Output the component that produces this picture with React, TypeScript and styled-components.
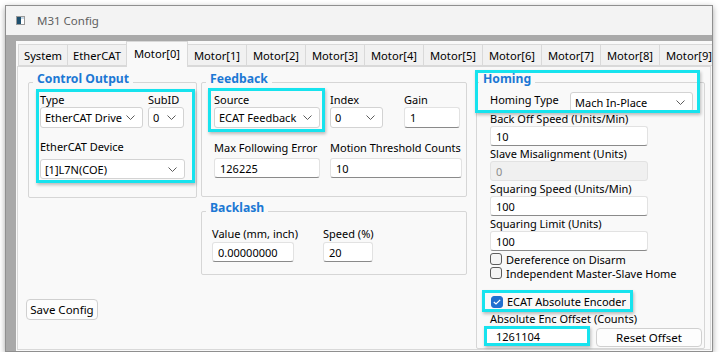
import styled, { createGlobalStyle } from 'styled-components';

const GlobalStyle = createGlobalStyle`
  html, body {
    margin: 0;
    padding: 0;
    background: #ffffff;
  }
  body {
    font-family: 'Noto Sans', 'Segoe UI', sans-serif;
    font-size: 11px;
    color: #000000;
  }
  * {
    box-sizing: border-box;
  }
`;

const CYAN = '#17e3ee';
const PANEL = '#f9f9f9';

const Window = styled.div`
  margin: 5px 0 0 5px;
  width: 708px;
  height: 347px;
  display: flex;
  flex-direction: column;
  border: 1px solid #8f8f8f;
  background: #f3f3f3;
  box-shadow: 0 2px 6px rgba(0, 0, 0, 0.35);
`;

const TitleBar = styled.div`
  height: 29px;
  flex-shrink: 0;
  display: flex;
  align-items: center;
  gap: 12px;
  padding-left: 10px;
  background: #f3f3f3;
`;

const WindowTitle = styled.span`
  color: #5f5f5f;
  font-size: 11.5px;
`;

const Frame = styled.div`
  flex: 1;
  display: flex;
  min-height: 0;
  padding: 6px 0 0 10px;
  background: #a9a9a9;
`;

const Surface = styled.div`
  flex: 1;
  min-width: 0;
  display: flex;
  flex-direction: column;
  padding: 0 1px 1px 1px;
  background: ${PANEL};
  overflow: hidden;
`;

const TabStrip = styled.div`
  height: 25px;
  flex-shrink: 0;
  display: flex;
  align-items: flex-end;
  padding-left: 1px;
  position: relative;
  z-index: 1;
`;

const Tab = styled.div<{ $width: number; $active?: boolean }>`
  flex-shrink: 0;
  width: ${(p) => p.$width}px;
  height: ${(p) => (p.$active ? 26 : 22)}px;
  margin-left: -1px;
  margin-bottom: ${(p) => (p.$active ? -1 : 0)}px;
  padding-bottom: ${(p) => (p.$active ? 3 : 0)}px;
  display: flex;
  align-items: center;
  justify-content: center;
  border: 1px solid #d9d9d9;
  border-bottom: ${(p) => (p.$active ? 'none' : '1px solid #d9d9d9')};
  background: ${(p) => (p.$active ? PANEL : '#f1f1f1')};
  font-size: 11.2px;
  white-space: nowrap;
  &:first-child {
    margin-left: 0;
  }
`;

const TabPanel = styled.div`
  flex: 1;
  min-height: 0;
  display: grid;
  grid-template-columns: 169px 266px 234px;
  column-gap: 4px;
  align-items: start;
  padding: 15px 0 0 10px;
  border: 1px solid #d9d9d9;
  background: ${PANEL};
`;

const Column = styled.div`
  display: flex;
  flex-direction: column;
  align-items: stretch;
`;

const Group = styled.section<{ $pad: string }>`
  position: relative;
  border: 1px solid #d6d6d6;
  border-radius: 2px;
  padding: ${(p) => p.$pad};
`;

const HomingGroup = styled(Group)`
  margin-left: 5px;
  align-self: stretch;
`;

const GroupTitle = styled.div<{ $indent: number }>`
  width: fit-content;
  margin: -12px 0 0 ${(p) => p.$indent}px;
  padding: 0 4px;
  background: ${PANEL};
  color: #1c78d4;
  font-size: 12.2px;
  font-weight: 700;
  line-height: 16px;
`;

const Highlight = styled.div<{ $pad: string; $width?: number }>`
  width: ${(p) => (p.$width ? `${p.$width}px` : 'auto')};
  border: 3px solid ${CYAN};
  padding: ${(p) => p.$pad};
  box-shadow: 1px 2px 3px rgba(0, 0, 0, 0.25);
`;

const HighlightOverlay = styled.div`
  position: absolute;
  left: -2px;
  top: -13px;
  width: 225px;
  height: 43px;
  border: 3px solid ${CYAN};
  box-shadow: 1px 2px 3px rgba(0, 0, 0, 0.25);
  pointer-events: none;
`;

const Label = styled.div<{ $lh?: number; $mb?: number }>`
  line-height: ${(p) => p.$lh ?? 15}px;
  margin-bottom: ${(p) => p.$mb ?? 0}px;
  white-space: nowrap;
`;

const Combo = styled.div<{ $w: number; $h?: number }>`
  width: ${(p) => p.$w}px;
  height: ${(p) => p.$h ?? 21}px;
  display: flex;
  align-items: center;
  justify-content: space-between;
  padding: 0 7px 0 4px;
  border: 1px solid #d3d3d3;
  border-radius: 3px;
  background: #ffffff;
  white-space: nowrap;
`;

const TextBox = styled.input<{ $w: number; $h?: number; $marked?: boolean }>`
  width: ${(p) => p.$w}px;
  height: ${(p) => p.$h ?? 20}px;
  padding: 0 ${(p) => (p.$marked ? 9 : 5)}px;
  font: inherit;
  font-size: 11px;
  color: #000000;
  background: #ffffff;
  border: 1px solid #e2e2e2;
  border-bottom-color: #8a8a8a;
  border-radius: 3px;
  outline: none;
  ${(p) =>
    p.$marked &&
    `
    border: 3px solid ${CYAN};
    border-radius: 0;
    box-shadow: 1px 2px 3px rgba(0, 0, 0, 0.25);
  `}
  &:disabled {
    background: #f0f0f0;
    color: #8c8c8c;
    border-color: #e2e2e2;
  }
`;

const Field = styled.div<{ $w?: number; $top?: number }>`
  display: flex;
  flex-direction: column;
  width: ${(p) => (p.$w ? `${p.$w}px` : 'auto')};
  padding-top: ${(p) => p.$top ?? 0}px;
`;

const Row = styled.div<{ $gap?: number; $top?: number; $left?: number }>`
  display: flex;
  align-items: flex-start;
  gap: ${(p) => p.$gap ?? 0}px;
  margin-top: ${(p) => p.$top ?? 0}px;
  padding-left: ${(p) => p.$left ?? 0}px;
`;

const ControlGrid = styled.div`
  display: grid;
  grid-template-columns: 103px 36px;
  column-gap: 5px;
`;

const HomingField = styled.div`
  display: flex;
  flex-direction: column;
  margin: 0 0 1px 13px;
`;

const CheckRow = styled.label<{ $left?: number }>`
  display: flex;
  align-items: center;
  height: ${(p) => (p.$left === undefined ? 14 : 15)}px;
  margin-left: ${(p) => p.$left ?? 13}px;
  gap: 4px;
  white-space: nowrap;
`;

const CheckBox = styled.span<{ $checked?: boolean }>`
  width: 12px;
  height: 12px;
  flex-shrink: 0;
  display: flex;
  align-items: center;
  justify-content: center;
  border: 1px solid ${(p) => (p.$checked ? '#1f6fcf' : '#5c5c5c')};
  border-radius: 3px;
  background: ${(p) => (p.$checked ? '#1f6fcf' : '#f4f4f4')};
`;

const PlainButton = styled.button<{ $w: number; $h: number }>`
  width: ${(p) => p.$w}px;
  height: ${(p) => p.$h}px;
  padding: 0;
  font: inherit;
  font-size: 11.5px;
  color: #000000;
  background: #fdfdfd;
  border: 1px solid #d0d0d0;
  border-radius: 4px;
`;

const SaveButton = styled(PlainButton)`
  margin: 101px 0 0 -2px;
`;

const Chevron = () => (
  <svg width="9" height="5" viewBox="0 0 9 5">
    <polyline points="0.5,0.5 4.5,4.5 8.5,0.5" fill="none" stroke="#5c5c5c" strokeWidth="1" />
  </svg>
);

const AppIcon = () => (
  <svg width="9" height="9" viewBox="0 0 9 9">
    <rect x="0.5" y="0.5" width="8" height="8" fill="#ffffff" stroke="#9a9a9a" />
    <rect x="1" y="1" width="4" height="7" fill="#1d4f6e" />
    <rect x="5" y="1" width="3" height="2" fill="#c9d9e6" />
  </svg>
);

const Tick = () => (
  <svg width="8" height="6" viewBox="0 0 8 6">
    <polyline points="0.8,3 3,5 7.2,0.8" fill="none" stroke="#ffffff" strokeWidth="1.2" />
  </svg>
);

const Select = ({ value, w, h }: { value: string; w: number; h?: number }) => (
  <Combo $w={w} $h={h}>
    <span>{value}</span>
    <Chevron />
  </Combo>
);

const tabs = ['System', 'EtherCAT', ...Array.from({ length: 10 }, (_, i) => `Motor[${i}]`)];
const tabWidth = (name: string) => (name === 'System' ? 50 : name === 'Motor[0]' ? 62 : 60);

const App = () => {
  return (
    <>
      <GlobalStyle />
      <Window>
        <TitleBar>
          <AppIcon />
          <WindowTitle>M31 Config</WindowTitle>
        </TitleBar>
        <Frame>
          <Surface>
            <TabStrip>
              {tabs.map((t) => (
                <Tab key={t} $width={tabWidth(t)} $active={t === 'Motor[0]'}>
                  {t}
                </Tab>
              ))}
            </TabStrip>
            <TabPanel>
              <Column>
                <Group $pad="0 1px 14px 7px">
                  <GroupTitle $indent={-3}>Control Output</GroupTitle>
                  <Highlight $pad="0 7px 1px 1px" style={{ marginTop: 2 }}>
                    <ControlGrid>
                      <Field>
                        <Label>Type</Label>
                        <Select value="EtherCAT Drive" w={103} />
                      </Field>
                      <Field>
                        <Label>SubID</Label>
                        <Select value="0" w={36} />
                      </Field>
                    </ControlGrid>
                    <Field $top={11}>
                      <Label $mb={5}>EtherCAT Device</Label>
                      <Select value="[1]L7N(COE)" w={145} h={20} />
                    </Field>
                  </Highlight>
                </Group>
                <SaveButton $w={72} $h={21}>Save Config</SaveButton>
              </Column>

              <Column>
                <Group $pad="0 0 18px 0">
                  <GroupTitle $indent={4}>Feedback</GroupTitle>
                  <Row $top={1} $left={6}>
                    <Highlight $pad="1px 2px 1px 3px">
                      <Label>Source</Label>
                      <Select value="ECAT Feedback" w={106} />
                    </Highlight>
                    <Field $top={4} style={{ marginLeft: 5 }}>
                      <Label>Index</Label>
                      <Select value="0" w={53} />
                    </Field>
                    <Field $top={4} style={{ marginLeft: 21 }}>
                      <Label>Gain</Label>
                      <TextBox $w={56} $h={21} readOnly defaultValue="1" />
                    </Field>
                  </Row>
                  <Row $top={8} $left={12} $gap={10}>
                    <Field $w={106}>
                      <Label $mb={3}>Max Following Error</Label>
                      <TextBox $w={106} readOnly defaultValue="126225" />
                    </Field>
                    <Field $w={132}>
                      <Label $mb={3}>Motion Threshold Counts</Label>
                      <TextBox $w={132} readOnly defaultValue="10" />
                    </Field>
                  </Row>
                </Group>

                <Group $pad="0 0 12px 10px" style={{ marginTop: 14 }}>
                  <GroupTitle $indent={-6}>Backlash</GroupTitle>
                  <Row $top={10} $gap={29}>
                    <Field $w={82}>
                      <Label $mb={1}>Value (mm, inch)</Label>
                      <TextBox $w={82} readOnly defaultValue="0.00000000" />
                    </Field>
                    <Field $w={50}>
                      <Label $mb={1}>Speed (%)</Label>
                      <TextBox $w={50} readOnly defaultValue="20" />
                    </Field>
                  </Row>
                </Group>
              </Column>

              <HomingGroup $pad="0">
                <HighlightOverlay />
                <GroupTitle $indent={2}>Homing</GroupTitle>
                <Row $top={5} $left={13}>
                  <Label style={{ width: 80 }}>Homing Type</Label>
                  <Select value="Mach In-Place" w={123} h={20} />
                </Row>
                <HomingField>
                  <Label $lh={14}>Back Off Speed (Units/Min)</Label>
                  <TextBox $w={158} readOnly defaultValue="10" />
                </HomingField>
                <HomingField>
                  <Label $lh={14}>Slave Misalignment (Units)</Label>
                  <TextBox $w={158} disabled defaultValue="0" />
                </HomingField>
                <HomingField>
                  <Label $lh={14}>Squaring Speed (Units/Min)</Label>
                  <TextBox $w={158} readOnly defaultValue="100" />
                </HomingField>
                <HomingField>
                  <Label $lh={14}>Squaring Limit (Units)</Label>
                  <TextBox $w={158} readOnly defaultValue="100" />
                </HomingField>
                <CheckRow>
                  <CheckBox />
                  Dereference on Disarm
                </CheckRow>
                <CheckRow>
                  <CheckBox />
                  Independent Master-Slave Home
                </CheckRow>
                <Highlight $pad="1px 0 0 0" $width={151} style={{ margin: '10px 0 0 5px' }}>
                  <CheckRow $left={6}>
                    <CheckBox $checked>
                      <Tick />
                    </CheckBox>
                    ECAT Absolute Encoder
                  </CheckRow>
                </Highlight>
                <Label $lh={14} style={{ marginLeft: 13 }}>
                  Absolute Enc Offset (Counts)
                </Label>
                <Row $left={7} $gap={6}>
                  <TextBox $w={106} $marked readOnly defaultValue="1261104" />
                  <PlainButton $w={106} $h={19} style={{ marginTop: 2 }}>
                    Reset Offset
                  </PlainButton>
                </Row>
              </HomingGroup>
            </TabPanel>
          </Surface>
        </Frame>
      </Window>
    </>
  );
};

export default App;
